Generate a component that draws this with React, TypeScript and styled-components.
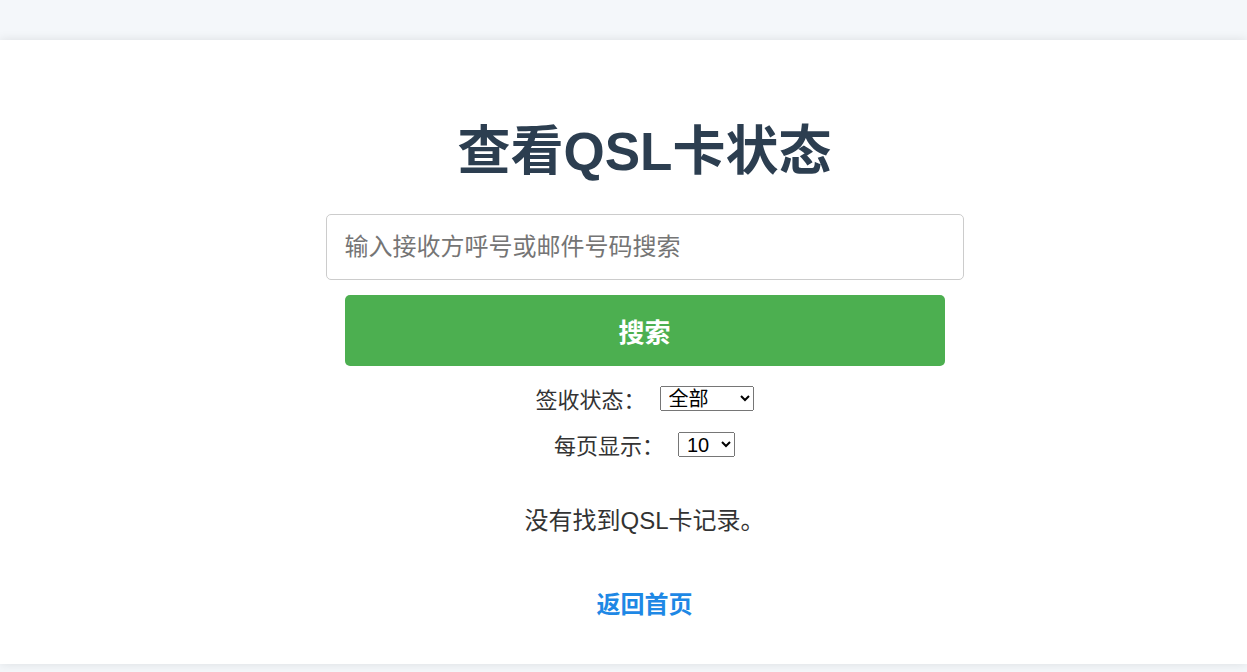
import React, { useState } from "react";
import styled, { createGlobalStyle } from "styled-components";

const GlobalStyle = createGlobalStyle`
  html, body {
    margin: 0;
    padding: 0;
    background: #f4f7fa;
  }
  body {
    font-family: "Liberation Sans", "Noto Sans CJK SC", sans-serif;
    color: #333;
  }
`;

const Page = styled.div`
  padding-top: 40px;
  padding-bottom: 8px;
`;

const Card = styled.main`
  background: #fff;
  box-shadow: 0 0 10px rgba(0, 0, 0, 0.1);
  padding: 82px 0 44px 42px;
  display: flex;
  flex-direction: column;
  align-items: center;
`;

const Title = styled.h1`
  margin: 0 0 32px;
  font-size: 53px;
  line-height: 60px;
  font-weight: 700;
  color: #2c3e50;
`;

const SearchForm = styled.form`
  display: flex;
  flex-direction: column;
  align-items: center;
  gap: 15px;
`;

const SearchInput = styled.input`
  box-sizing: border-box;
  width: 638px;
  height: 66px;
  padding: 0 18px;
  border: 1px solid #ccc;
  border-radius: 5px;
  font-family: inherit;
  font-size: 24px;
  color: #333;
  outline: none;

  &::placeholder {
    color: #757575;
  }
`;

const SearchButton = styled.button`
  width: 600px;
  height: 71px;
  border: none;
  border-radius: 5px;
  background: #4caf50;
  color: #fff;
  font-family: inherit;
  font-size: 26px;
  font-weight: 700;
  cursor: pointer;
`;

const Filters = styled.div`
  margin-top: 17px;
  display: flex;
  flex-direction: column;
  align-items: center;
  gap: 16px;
`;

const FilterRow = styled.label`
  display: flex;
  align-items: center;
  height: 30px;
  font-size: 22px;
  color: #333;
`;

const Select = styled.select`
  margin-left: 14px;
  height: 25px;
  font-family: "Liberation Sans", "Noto Sans CJK SC", sans-serif;
  font-size: 20px;
  color: #000;
  padding: 0 8px 0 4px;
`;

const Message = styled.p`
  margin: 47px 0 0;
  font-size: 24px;
  line-height: 30px;
  color: #333;
`;

const HomeLink = styled.a`
  margin-top: 54px;
  font-size: 24px;
  line-height: 30px;
  font-weight: 700;
  color: #1e88e5;
  text-decoration: none;
`;

export default function App() {
  const [query, setQuery] = useState("");
  const [status, setStatus] = useState("all");
  const [perPage, setPerPage] = useState("10");

  return (
    <Page>
      <GlobalStyle />
      <Card>
        <Title>查看QSL卡状态</Title>
        <SearchForm onSubmit={(e) => e.preventDefault()}>
          <SearchInput
            value={query}
            onChange={(e) => setQuery(e.target.value)}
            placeholder="输入接收方呼号或邮件号码搜索"
          />
          <SearchButton type="submit">搜索</SearchButton>
        </SearchForm>
        <Filters>
          <FilterRow>
            签收状态：
            <Select value={status} onChange={(e) => setStatus(e.target.value)}>
              <option value="all">全部</option>
              <option value="yes">已签收</option>
              <option value="no">未签收</option>
            </Select>
          </FilterRow>
          <FilterRow>
            每页显示：
            <Select value={perPage} onChange={(e) => setPerPage(e.target.value)}>
              <option value="10">10</option>
              <option value="20">20</option>
              <option value="50">50</option>
            </Select>
          </FilterRow>
        </Filters>
        <Message>没有找到QSL卡记录。</Message>
        <HomeLink href="#">返回首页</HomeLink>
      </Card>
    </Page>
  );
}
